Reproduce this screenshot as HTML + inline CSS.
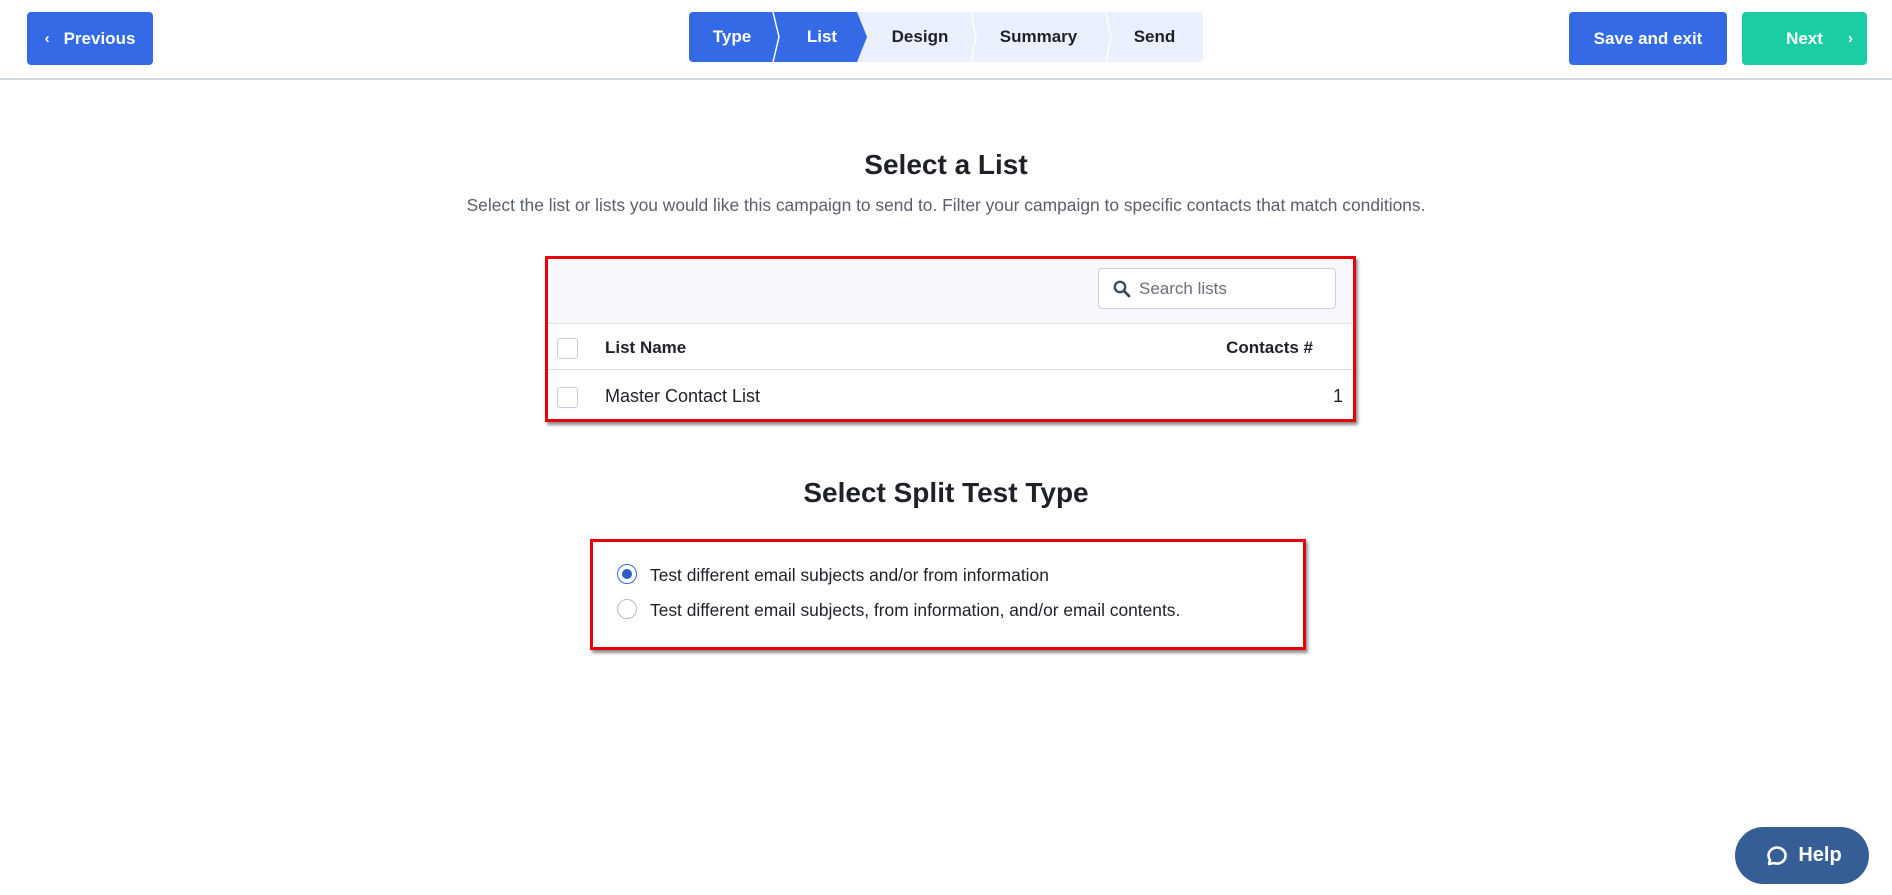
<!DOCTYPE html>
<html><head><meta charset="utf-8"><style>
*{box-sizing:border-box;margin:0;padding:0}
body{width:1892px;height:895px;background:#fff;font-family:"Liberation Sans",sans-serif;position:relative;overflow:hidden;color:#1f2129}
.abs{position:absolute}
.btn{position:absolute;border-radius:4px;color:#fff;font-weight:bold;font-size:17px;display:flex;align-items:center;justify-content:center}
.hdr{position:absolute;left:0;top:78px;width:1892px;height:2px;background:#d3d8e0}
.step{position:absolute;top:12px;height:50px;display:flex;align-items:center;justify-content:center;font-size:17px;font-weight:bold}
h1{position:absolute;left:0;width:1892px;text-align:center;font-size:28px;font-weight:bold;color:#1f2129}
.cb{position:absolute;width:21px;height:21px;border:1px solid #c8ccd4;border-radius:3px;background:#fff}
.radio{position:absolute;width:20px;height:20px;border-radius:50%;border:1px solid #b8bcc4;background:#fff}
</style></head><body>
<div class="btn" style="left:27px;top:12px;width:126px;height:53px;background:#346ae6"><span style="margin-right:14px;font-size:15px">‹</span>Previous</div>
<div class="abs" style="left:689px;top:12px;width:514px;height:50px;background:#eaf0fd;border-radius:4px;overflow:hidden">
<svg width="514" height="50" style="position:absolute;left:0;top:0"><polygon points="0,0 86,0 96,0 86,50 0,50" fill="#346ae6"/><polygon points="86,0 168,0 178,25 168,50 86,50 90,25" fill="#346ae6"/>
<polyline points="84,0 90,25 84,50" fill="none" stroke="#fff" stroke-width="1.5"/>
<polyline points="282,0 287,25 282,50" fill="none" stroke="#fff" stroke-width="1.5"/>
<polyline points="417,0 422,25 417,50" fill="none" stroke="#fff" stroke-width="1.5"/></svg>
</div>
<div class="step" style="left:689px;width:86px;color:#fff">Type</div>
<div class="step" style="left:775px;width:94px;color:#fff">List</div>
<div class="step" style="left:869px;width:102px">Design</div>
<div class="step" style="left:971px;width:135px">Summary</div>
<div class="step" style="left:1106px;width:97px">Send</div>
<div class="btn" style="left:1569px;top:12px;width:158px;height:53px;background:#346ae6">Save and exit</div>
<div class="btn" style="left:1742px;top:12px;width:125px;height:53px;background:#1acda2">Next<span style="position:absolute;right:14px;font-size:15px">›</span></div>
<div class="hdr"></div>

<h1 style="top:149px">Select a List</h1>
<div class="abs" style="left:0;width:1892px;top:195px;text-align:center;font-size:17.4px;color:#5b5f6b">Select the list or lists you would like this campaign to send to. Filter your campaign to specific contacts that match conditions.</div>

<div class="abs" style="left:545px;top:256px;width:811px;height:166px;border:3px solid #e8000b;box-shadow:2px 3px 3px rgba(0,0,0,.45)">
 <div class="abs" style="left:0;top:0;width:805px;height:65px;background:#f6f8fc;border-bottom:1px solid #dde1e8"></div>
 <div class="abs" style="left:550px;top:9px;width:238px;height:41px;border:1px solid #cdd2da;border-radius:4px;background:#fff;font-size:17px;color:#6b6f7b;padding:10px 0 0 40px">Search lists
  <svg width="18" height="18" style="position:absolute;left:14px;top:11px"><circle cx="7" cy="7" r="5.2" fill="none" stroke="#3b4a66" stroke-width="2.4"/><line x1="11" y1="11" x2="16" y2="16" stroke="#3b4a66" stroke-width="2.8" stroke-linecap="round"/></svg></div>
 <div class="cb" style="left:9px;top:79px"></div>
 <div class="abs" style="left:57px;top:79px;font-size:17px;font-weight:bold">List Name</div>
 <div class="abs" style="right:40px;top:79px;font-size:17px;font-weight:bold">Contacts #</div>
 <div class="abs" style="left:0;top:110px;width:805px;height:1px;background:#e1e4ea"></div>
 <div class="cb" style="left:9px;top:128px"></div>
 <div class="abs" style="left:57px;top:127px;font-size:18px">Master Contact List</div>
 <div class="abs" style="right:10px;top:127px;font-size:18px">1</div>
</div>

<h1 style="top:477px">Select Split Test Type</h1>
<div class="abs" style="left:590px;top:539px;width:716px;height:111px;border:3px solid #e8000b;box-shadow:2px 3px 3px rgba(0,0,0,.45)">
 <div class="radio" style="left:24px;top:22px;border-color:#346ae6"><div style="position:absolute;left:4px;top:4px;width:10px;height:10px;border-radius:50%;background:#2d5fc4"></div></div>
 <div class="abs" style="left:57px;top:23px;font-size:17.4px">Test different email subjects and/or from information</div>
 <div class="radio" style="left:24px;top:57px"></div>
 <div class="abs" style="left:57px;top:58px;font-size:17.4px">Test different email subjects, from information, and/or email contents.</div>
</div>

<div class="btn" style="left:1735px;top:827px;width:134px;height:57px;border-radius:29px;background:#355e96;font-size:20px">
<svg width="26" height="26" style="margin-right:10px" viewBox="0 0 26 26"><path d="M7 21 L8 17 A8.5 8 0 1 1 12 20 Z" fill="none" stroke="#fff" stroke-width="2.6" stroke-linejoin="round"/></svg>Help</div>
</body></html>
